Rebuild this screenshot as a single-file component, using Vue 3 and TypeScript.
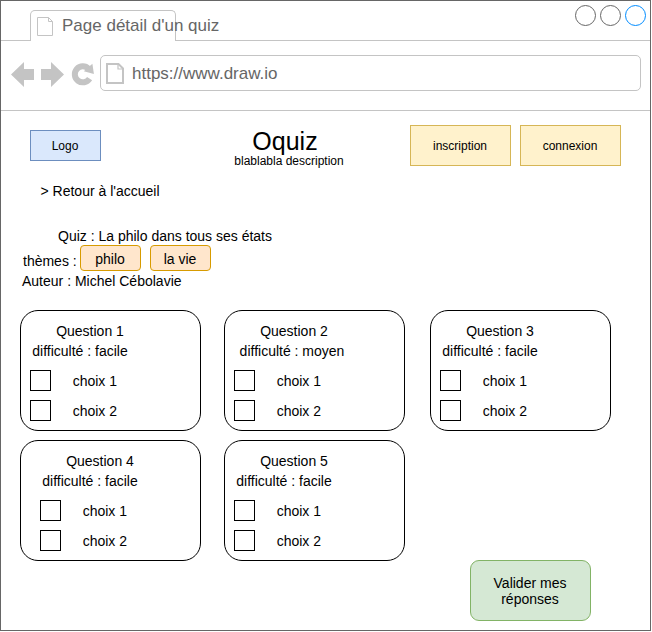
<script setup lang="ts">
interface Question {
  id: number
  level: string
  indented?: boolean
}

const questions: Question[] = [
  { id: 1, level: 'facile' },
  { id: 2, level: 'moyen' },
  { id: 3, level: 'facile' },
  { id: 4, level: 'facile', indented: true },
  { id: 5, level: 'facile' },
]
const choices: string[] = ['choix 1', 'choix 2']
const themes: string[] = ['philo', 'la vie']
</script>

<template>
  <div class="window">
    <div class="tabs">
      <div class="tab-lead"></div>
      <div class="tab">
        <svg class="tab-icon" width="18" height="20" viewBox="0 0 18 20">
          <path d="M1.5 1.5H12.5L16.5 5.5V19.5H1.5ZM12.5 1.5V5.5H16.5" fill="none" stroke="#c4c4c4" />
        </svg>
        <span class="tab-title">Page détail d'un quiz</span>
      </div>
      <div class="tab-rest">
        <span class="dot"></span>
        <span class="dot"></span>
        <span class="dot active"></span>
      </div>
    </div>

    <div class="toolbar">
      <svg class="nav" width="84" height="28" viewBox="11 61 84 28">
        <path d="M11 74.5L24 62V69H34V80H24V87Z" fill="#c4c4c4" />
        <path d="M64 74.5L51 62V69H41V80H51V87Z" fill="#c4c4c4" />
        <path d="M88.6 68.8A8 8 0 1 0 89.6 78.6" fill="none" stroke="#c4c4c4" stroke-width="6" />
        <path d="M92.4 63.8L93.9 73.9L83.8 71.2Z" fill="#c4c4c4" />
      </svg>
      <div class="address">
        <svg width="20" height="22" viewBox="0 0 20 22">
          <path d="M2 2H13.5L18 6.5V21H2Z" fill="none" stroke="#c4c4c4" stroke-width="2" />
          <path d="M13 2V7H18" fill="none" stroke="#c4c4c4" stroke-width="1.2" />
        </svg>
        <span class="url">https://www.draw.io</span>
      </div>
    </div>

    <header class="header">
      <div class="logo">Logo</div>
      <div class="brand">
        <h1>Oquiz</h1>
        <p>blablabla description</p>
      </div>
      <button class="account">inscription</button>
      <button class="account">connexion</button>
    </header>

    <a class="back">&gt; Retour à l'accueil</a>

    <section class="details">
      <h2>Quiz : La philo dans tous ses états</h2>
      <div class="themes">
        <span class="label">thèmes :</span>
        <span v-for="theme in themes" :key="theme" class="tag">{{ theme }}</span>
      </div>
      <p class="author">Auteur : Michel Cébolavie</p>
    </section>

    <section class="questions">
      <article v-for="q in questions" :key="q.id" class="card" :class="{ indented: q.indented }">
        <h3>Question {{ q.id }}</h3>
        <p class="level" :class="q.level">difficulté : {{ q.level }}</p>
        <div v-for="choice in choices" :key="choice" class="choice">
          <span class="box"></span>
          <span>{{ choice }}</span>
        </div>
      </article>
    </section>

    <button class="submit">Valider mes<br />réponses</button>
  </div>
</template>

<style>
body {
  background: #fff;
}
</style>

<style scoped>
* {
  box-sizing: border-box;
}
h1,
h2,
h3,
p {
  margin: 0;
  font-weight: normal;
  font-size: inherit;
}
button {
  font-family: inherit;
  color: #000;
  padding: 0 1px 0 0;
}
.window {
  width: 651px;
  height: 631px;
  border: 1px solid #666;
  background: #fff;
  color: #000;
  font-family: "Liberation Sans", Arial, sans-serif;
  font-size: 14px;
  line-height: 20px;
}
.tabs {
  display: flex;
  align-items: flex-end;
  height: 40px;
}
.tab-lead {
  width: 29px;
  border-bottom: 1px solid #c4c4c4;
}
.tab {
  position: relative;
  display: flex;
  align-items: center;
  width: 146px;
  height: 31px;
  padding-left: 5px;
  border: 1px solid #c4c4c4;
  border-bottom: none;
  border-radius: 5px 5px 0 0;
  color: #666;
  font-size: 17px;
  white-space: nowrap;
}
.tab-icon {
  flex: none;
}
.tab-title {
  margin-left: 8px;
}
.tab-rest {
  flex: 1;
  display: flex;
  justify-content: flex-end;
  gap: 4px;
  height: 40px;
  padding: 4px 4px 0 0;
  border-bottom: 1px solid #c4c4c4;
}
.dot {
  width: 21px;
  height: 21px;
  border: 1px solid #666;
  border-radius: 50%;
}
.dot.active {
  border-color: #008cff;
}
.toolbar {
  display: flex;
  align-items: flex-start;
  height: 70px;
  padding: 14px 9px 0 10px;
  border-bottom: 1px solid #c4c4c4;
}
.nav {
  flex: none;
  margin-top: 6px;
}
.address {
  flex: 1;
  display: flex;
  align-items: center;
  gap: 7px;
  height: 36px;
  margin-left: 5px;
  padding-left: 4px;
  border: 1px solid #c4c4c4;
  border-radius: 5px;
  color: #666;
  font-size: 17px;
}
.url {
  padding-top: 2px;
}
.header {
  display: flex;
  padding: 14px 0 0 29px;
  font-size: 12px;
}
.logo {
  width: 71px;
  height: 31px;
  margin-top: 5px;
  padding-right: 1px;
  border: 1px solid #6c8ebf;
  background: #dae8fc;
  line-height: 30px;
  text-align: center;
}
.brand {
  width: 309px;
  text-align: center;
}
.brand h1 {
  padding-left: 59px;
  padding-top: 2px;
  font-size: 25px;
  line-height: 29px;
}
.brand p {
  padding-left: 67px;
  line-height: 10px;
}
.account {
  width: 101px;
  height: 41px;
  margin-right: 9px;
  border: 1px solid #d6b656;
  background: #fff2cc;
  font-size: 12px;
}
.back {
  display: block;
  margin: 15px 0 0 39.5px;
}
.details {
  margin-top: 25px;
}
.details h2 {
  padding-left: 57px;
}
.themes {
  display: flex;
  height: 26px;
  margin-top: -1px;
}
.label {
  width: 79px;
  padding: 6px 0 0 22px;
  white-space: nowrap;
}
.tag {
  width: 61px;
  height: 26px;
  margin-right: 9px;
  padding-right: 1px;
  border: 1px solid #d79b00;
  border-radius: 4px;
  background: #ffe6cc;
  line-height: 26px;
  text-align: center;
}
.author {
  padding-left: 21px;
}
.questions {
  display: grid;
  grid-template-columns: 204px 206px 181px;
  row-gap: 9px;
  margin: 19px 0 0 19px;
}
.card {
  width: 181px;
  height: 121px;
  padding: 10px 0 0 9px;
  border: 1px solid #000;
  border-radius: 18px;
}
.card.indented {
  padding-left: 19px;
}
.card h3 {
  width: 120px;
  text-align: center;
}
.level {
  width: 100px;
  text-align: center;
}
.level.moyen {
  width: 116px;
}
.choice {
  display: flex;
  align-items: center;
  gap: 21.7px;
  height: 21px;
  margin-top: 9px;
}
.box {
  width: 21px;
  height: 21px;
  border: 1px solid #000;
}
.submit {
  display: block;
  width: 121px;
  height: 61px;
  margin: -1px 0 0 469px;
  border: 1px solid #82b366;
  border-radius: 9px;
  background: #d5e8d4;
  font-size: 14px;
  line-height: 16px;
}
</style>
